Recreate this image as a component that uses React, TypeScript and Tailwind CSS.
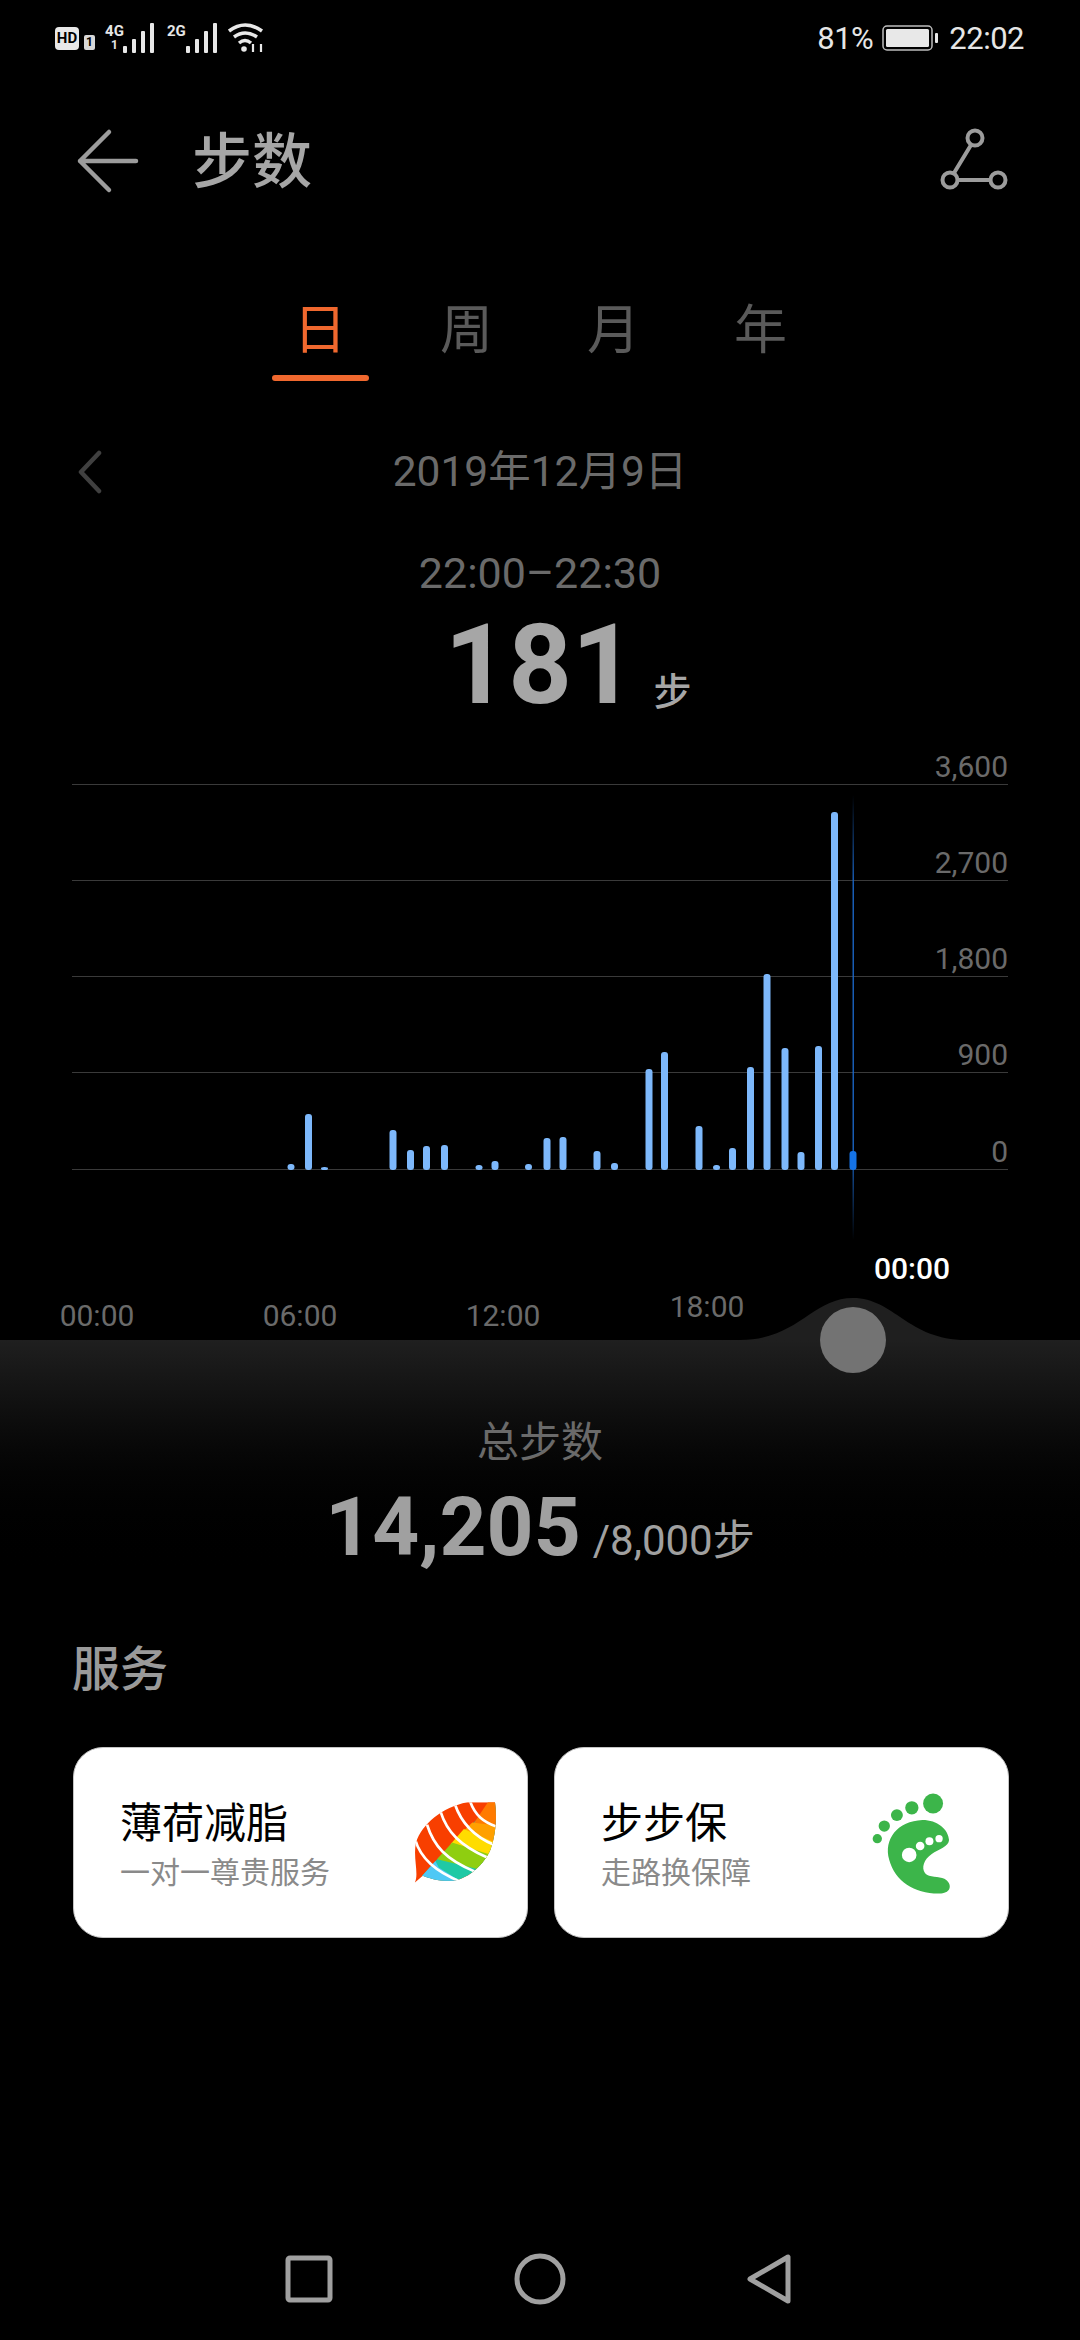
import React from 'react';

const bars: [number, number][] = [
  [291, 1164], [308.5, 1114], [324.5, 1167], [393, 1130], [410.5, 1150], [426.5, 1146], [444.5, 1145],
  [479, 1165], [495, 1161], [528.5, 1164], [547, 1138], [563, 1137], [597, 1151], [614.5, 1163],
  [649, 1069], [664.5, 1052], [699, 1126], [716.5, 1165], [732.5, 1148], [750.5, 1067], [767, 974],
  [785, 1048], [801, 1152], [818.5, 1046], [834.5, 812],
];

const CHART_TOP = 720;
const BASELINE = 1170;

const Signal: React.FC = () => (
  <svg width="32" height="30" viewBox="0 0 32 30" className="text-[#e8e8e8]" fill="currentColor">
    <rect x="0" y="23" width="4" height="7" rx="1" />
    <rect x="9" y="16" width="4" height="14" rx="1" />
    <rect x="18" y="8" width="4" height="22" rx="1" />
    <rect x="27" y="0" width="4" height="30" rx="1" />
  </svg>
);

const StatusBar: React.FC = () => (
  <div className="h-[76px] flex items-center justify-between pl-[55px] pr-[56px] text-[#e6e6e6]">
    <div className="flex items-center h-[32px]">
      <span className="w-[24px] h-[23px] rounded-[4px] bg-[#e8e8e8] text-black text-[15px] font-bold leading-[23px] text-center">HD</span>
      <span className="ml-[5px] mt-[8px] w-[11px] h-[15px] rounded-[2px] bg-[#d8d8d8] text-black text-[12px] font-bold leading-[15px] text-center">1</span>
      <div className="ml-[11px] w-[17px] flex flex-col items-center text-[15px] font-bold leading-[13px]">
        <span>4G</span>
        <span className="mt-[2px] text-[12px] leading-[11px]">1</span>
      </div>
      <Signal />
      <span className="ml-[12px] mb-[14px] text-[15px] font-bold leading-[13px]">2G</span>
      <Signal />
      <svg width="38" height="30" viewBox="0 0 38 30" className="ml-[10px]" fill="none" stroke="#e8e8e8" strokeWidth="3.5">
        <path d="M1 8 Q17 -4 34 8" />
        <path d="M6 14 Q17 6 29 14" />
        <path d="M11 20 Q17 15 23 20" />
        <circle cx="16" cy="26" r="2.8" fill="#e8e8e8" stroke="none" />
        <path d="M25 29 V21 M33 29 V21" strokeWidth="2.2" />
      </svg>
    </div>
    <div className="flex items-center text-[31px] leading-none tracking-[-0.5px]">
      <span>81%</span>
      <svg width="57" height="26" viewBox="0 0 57 26" className="ml-[9px]">
        <rect x="1" y="1" width="49" height="24" rx="4" fill="none" stroke="#bdbdbd" strokeWidth="1.5" />
        <rect x="4" y="4" width="43" height="18" rx="1.5" fill="#e8e8e8" />
        <rect x="53" y="8" width="3" height="10" rx="1" fill="#e8e8e8" />
      </svg>
      <span className="ml-[10px]">22:02</span>
    </div>
  </div>
);

const Header: React.FC = () => (
  <div className="mt-[40px] h-[90px] flex items-center pl-[76px] pr-[70px]">
    <svg width="66" height="66" viewBox="0 0 66 66" fill="none" stroke="#9c9c9c" strokeWidth="4.5" strokeLinecap="round" strokeLinejoin="round">
      <path d="M33 4 L4 33 L33 62 M4 33 H60" />
    </svg>
    <h1 className="ml-[50px] mt-[3px] text-[60px] leading-none font-medium text-[#a6a6a6]">步数</h1>
    <svg width="70" height="66" viewBox="0 0 70 66" className="ml-auto" fill="none" stroke="#9c9c9c" strokeWidth="4">
      <circle cx="35" cy="10" r="7.5" />
      <circle cx="10" cy="52" r="7.5" />
      <circle cx="58" cy="52" r="7.5" />
      <path d="M31 17 L14 45 M18 52 H50" />
    </svg>
  </div>
);

const Tabs: React.FC = () => (
  <div className="mt-[84px] h-[91px] pt-[11px] flex justify-center text-[53px] leading-[60px] text-[#5a5a5a]">
    <div className="w-[146px] flex flex-col items-center ml-[1px]">
      <span className="text-[#f0682e]">日</span>
      <span className="mt-[14px] w-[97px] h-[6px] rounded-full bg-[#f0682e]" />
    </div>
    <span className="w-[147px] text-center">周</span>
    <span className="w-[147px] text-center">月</span>
    <span className="w-[147px] text-center">年</span>
  </div>
);

const Chart: React.FC = () => (
  <div className="relative">
    <div className="mx-[72px] text-[30px] text-right text-[#6a6a6a] leading-[36px]">
      {[['3,600', 'h-[65px]'], ['2,700', 'h-[96px]'], ['1,800', 'h-[96px]'], ['900', 'h-[96px]'], ['0', 'h-[97px]']].map(([label, h]) => (
        <div key={label} className={`${h} flex items-end justify-end border-b border-[#3a3a3a]`}>
          <span className="-mb-[1px]">{label}</span>
        </div>
      ))}
    </div>

    {/* bars and the cursor line lie over the grid */}
    <svg className="absolute left-0 top-0" width="1080" height="620" viewBox={`0 ${CHART_TOP} 1080 620`}>
      <defs>
        <linearGradient id="cursor" x1="0" y1="0" x2="0" y2="1">
          <stop offset="0" stopColor="#1a66c8" stopOpacity="0" />
          <stop offset="0.2" stopColor="#1a66c8" stopOpacity="0.9" />
          <stop offset="0.8" stopColor="#1a66c8" stopOpacity="0.9" />
          <stop offset="1" stopColor="#1a66c8" stopOpacity="0" />
        </linearGradient>
      </defs>
      <path d="M740 1340 C798 1340 812 1298 853 1298 C894 1298 908 1340 966 1340 Z" fill="#1f1f1f" />
      <rect x="852.5" y="795" width="1.5" height="445" fill="url(#cursor)" />
      {bars.map(([x, top]) => (
        <rect key={x} x={x - 3.5} y={top} width="7" height={BASELINE - top} rx="3" fill="#7db8fb" />
      ))}
      <rect x="849.5" y="1151" width="7" height="19" rx="3" fill="#1573e6" />
    </svg>

    <div className="relative h-[170px] pb-[6px] pl-[47px] flex items-end gap-[103px] text-[30px] leading-[36px] text-center text-[#6a6a6a]">
      <span className="w-[100px]">00:00</span>
      <span className="w-[100px]">06:00</span>
      <span className="w-[100px]">12:00</span>
      <span className="w-[100px] mb-[9px] ml-[1px]">18:00</span>
      <span className="w-[100px] ml-[2px] mb-[47px] text-white font-medium">00:00</span>
    </div>

    <div className="absolute left-[820px] top-[587px] w-[66px] h-[66px] rounded-full bg-[#737373]" />
  </div>
);

const Leaf: React.FC = () => (
  <svg width="87" height="87" viewBox="70 115 260 260">
    <defs>
      <clipPath id="leaf">
        <path d="M78 365 C92 340 72 290 82 245 C100 190 160 140 235 125 L318 125 C324 165 322 215 305 265 C285 312 240 350 200 358 C165 364 120 352 102 344 Z" />
      </clipPath>
    </defs>
    <g clipPath="url(#leaf)">
      <rect x="60" y="110" width="280" height="270" fill="#f83f00" />
      <path d="M318 125 L330 125 L330 380 L100 380 L100 345 L150 290 L200 240 L250 190 Z" fill="#1fc9a5" />
      <path d="M330 120 L300 120 L250 195 L330 200 Z" fill="#ff7a00" />
      <path d="M250 185 L330 195 L330 260 L225 210 Z" fill="#ffa000" />
      <path d="M225 205 L330 250 L330 310 L185 250 Z" fill="#ffdc00" />
      <path d="M190 245 L330 290 L330 340 L145 295 Z" fill="#8fce10" />
      <path d="M100 345 L140 300 L150 320 L230 370 L100 380 Z" fill="#4fc8f5" />
      <g fill="none" stroke="#fff" strokeWidth="8">
        <path d="M80 238 C95 290 135 330 215 362" />
        <path d="M115 192 C135 255 170 295 258 332" />
        <path d="M155 152 C175 215 215 255 295 290" />
        <path d="M198 130 C215 180 250 225 315 252" />
        <path d="M243 120 C258 165 285 185 325 198" />
      </g>
    </g>
  </svg>
);

const Foot: React.FC = () => (
  <svg width="83" height="104" viewBox="35 25 250 312" className="mr-[26px]">
    <g fill="#3cb54a">
      <circle cx="222" cy="62" r="30" />
      <circle cx="158" cy="75" r="20" />
      <circle cx="113" cy="97" r="18" />
      <circle cx="75" cy="130" r="17" />
      <circle cx="54" cy="168" r="14" />
      <path d="M190 112 C235 112 268 140 270 172 C270 192 238 200 218 214 C194 230 186 256 198 272 C210 286 240 280 256 289 C282 304 276 332 246 333 C170 336 108 298 90 232 C72 170 115 115 190 112 Z" />
    </g>
    <g fill="#fff">
      <circle cx="150" cy="217" r="22" />
      <circle cx="183" cy="190" r="13" />
      <circle cx="211" cy="176" r="12" />
      <circle cx="240" cy="168" r="11" />
    </g>
  </svg>
);

const ServiceCard: React.FC<{ title: string; sub: string; children: React.ReactNode }> = ({ title, sub, children }) => (
  <div className="w-[455px] h-[191px] rounded-[30px] bg-white border border-[#c4c4c4] flex items-center justify-between pl-[46px] pr-[28px]">
    <div className="mt-[6px]">
      <div className="text-[42px] leading-[50px] text-black">{title}</div>
      <div className="mt-[4px] text-[30px] leading-[40px] text-[#8a8a8a]">{sub}</div>
    </div>
    {children}
  </div>
);

const NavBar: React.FC = () => (
  <div className="mt-auto h-[90px] flex items-start">
    <svg width="1080" height="60" viewBox="0 0 1080 60" fill="none" stroke="#a0a0a0" strokeWidth="5" strokeLinejoin="round">
      <rect x="288" y="8" width="42" height="42" rx="2" />
      <circle cx="540" cy="29" r="23" />
      <path d="M750 29 L788 7 V51 Z" />
    </svg>
  </div>
);

export default function App() {
  return (
    <div
      className="w-[1080px] h-[2340px] bg-black flex flex-col overflow-hidden"
      style={{ fontFamily: 'Roboto, "Noto Sans CJK SC", sans-serif' }}
    >
      <StatusBar />
      <Header />
      <Tabs />

      <div className="mt-[61px] h-[60px] relative flex items-center justify-center text-[42.5px] leading-none text-[#6a6a6a]">
        <svg width="24" height="44" viewBox="0 0 24 44" className="absolute left-[78px] top-[8px]" fill="none" stroke="#404040" strokeWidth="4.5" strokeLinecap="round" strokeLinejoin="round">
          <path d="M21 3 L3 22 L21 41" />
        </svg>
        2019年12月9日
      </div>
      <div className="mt-[46px] h-[50px] flex items-center justify-center text-[43px] leading-none text-[#6a6a6a]">22:00–22:30</div>
      <div className="mt-[12px] h-[110px] flex items-end justify-center pl-[56px] text-[#a6a6a6]">
        <span className="text-[111px] leading-[110px] font-bold">181</span>
        <span className="ml-[18px] mb-[3px] text-[38px] leading-[50px] font-medium">步</span>
      </div>

      <Chart />

      <div className="h-[240px] bg-linear-to-b from-[#1f1f1f] to-black flex flex-col items-center">
        <div className="mt-[78px] text-[42px] leading-[50px] text-[#6a6a6a]">总步数</div>
        <div className="mt-[9px] flex items-baseline text-[#a0a0a0]">
          <span className="text-[82px] leading-[100px] font-bold">14,205</span>
          <span className="ml-[12px] text-[42px]">/8,000步</span>
        </div>
      </div>

      <h2 className="ml-[72px] mt-[62px] text-[48px] leading-[56px] font-medium text-[#9a9a9a]">服务</h2>
      <div className="mt-[49px] ml-[73px] flex gap-[26px]">
        <ServiceCard title="薄荷减脂" sub="一对一尊贵服务"><Leaf /></ServiceCard>
        <ServiceCard title="步步保" sub="走路换保障"><Foot /></ServiceCard>
      </div>

      <NavBar />
    </div>
  );
}
